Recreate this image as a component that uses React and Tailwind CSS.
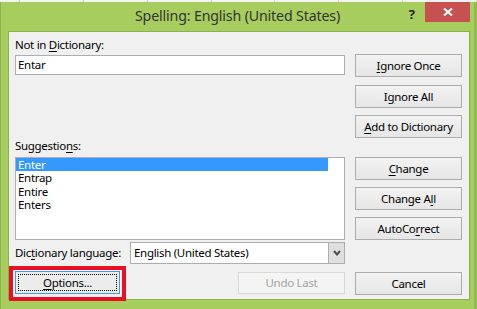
import React from 'react'

const font = "font-['Noto_Sans',sans-serif]"
const txt = 'text-[11.5px] tracking-[-0.3px] leading-[16px] whitespace-nowrap'

function Btn({ children, className = '' }){
  return (
    <div className={`h-[23px] w-[107px] flex items-center justify-center border border-[#acacac] bg-gradient-to-b from-[#f2f2f2] to-[#e6e6e6] text-black ${txt} ${className}`}>
      {children}
    </div>
  )
}

const U = ({ children }) => <span className="underline underline-offset-[2px]">{children}</span>

export default function App(){
  const cells = [20, 64, 64, 64, 63, 64, 64, 74]
  const words = ['Enter', 'Entrap', 'Entire', 'Enters']

  return (
    <div className={`w-[477px] h-[309px] overflow-hidden flex flex-col bg-[#a6cd5e] ${font}`}>
      {/* sheet grid peeking above the dialog */}
      <div className="h-[2px] flex bg-[#f3f3f3] shrink-0">
        {cells.map((w, i) => <div key={i} style={{ width: w }} className="h-full border-r border-[#d4d4d4]" />)}
      </div>

      <div className="flex-1 flex flex-col border-l border-r-[3px] border-l-[#8fb553] border-r-[#93ba57]">
        {/* title bar */}
        <div className="h-[29px] grid grid-cols-[1fr_auto_1fr] shrink-0">
          <div />
          <div className="pt-[4px] text-[14.2px] tracking-[-0.15px] leading-[20px] text-[#333] whitespace-nowrap">Spelling: English (United States)</div>
          <div className="flex justify-end items-start pr-[4px]">
            <div className="mt-[4px] mr-[10px] text-[13px] leading-[16px] font-bold text-[#222]">?</div>
            <div className="w-[45px] h-[20px] bg-[#c75050] flex items-center justify-center">
              <svg width="10" height="8" viewBox="0 0 10 8">
                <path d="M1 0.5 L9 7.5 M9 0.5 L1 7.5" stroke="#fff" strokeWidth="2" />
              </svg>
            </div>
          </div>
        </div>

        {/* dialog body */}
        <div className="relative flex-1 ml-[7px] mr-[4px] mb-[9px] border border-[#8ab14d] bg-[#f0f0f0] flex pl-[6px] gap-[10px]">
          <div className="w-[330px] flex flex-col">
            <div className={`mt-[5px] text-black ${txt}`}>Not in <U>D</U>ictionary:</div>
            <div className={`mt-[2px] h-[20px] border border-[#abadb3] bg-white px-[2px] text-black ${txt} leading-[18px]`}>Entar</div>

            <div className={`mt-[63px] text-black ${txt}`}>Suggestio<U>n</U>s:</div>
            <div className={`mt-[3px] h-[83px] border border-[#abadb3] bg-white ${txt}`}>
              {words.map((w, i) => (
                <div key={w} className={`h-[13.4px] leading-[13.4px] w-[312px] pl-[2px] ${i === 0 ? 'bg-[#3399ff] text-white' : 'text-black'}`}>{w}</div>
              ))}
            </div>

            <div className="mt-[2px] h-[22px] flex items-center justify-between">
              <div className={`text-black ${txt}`}>Dic<U>t</U>ionary language:</div>
              <div className="w-[215px] h-[22px] border border-[#abadb3] bg-white flex">
                <div className={`flex-1 pl-[3px] text-black ${txt} leading-[20px]`}>English (United States)</div>
                <div className="w-[16px] h-full border-l border-[#abadb3] bg-[#dfdfdf] flex items-center justify-center">
                  <svg width="8" height="6" viewBox="0 0 8 6">
                    <path d="M1 1 L4 4.5 L7 1" stroke="#4d4d4d" strokeWidth="2" fill="none" />
                  </svg>
                </div>
              </div>
            </div>

            <div className="mt-[7px] flex justify-between items-start">
              <div className="h-[23px] w-[105px] border border-[#3c9af0] bg-[#ececec] p-[2px]">
                <div className={`h-full border border-dotted border-black flex items-center justify-center text-black ${txt}`}>
                  <span><U>O</U>ptions...</span>
                </div>
              </div>
              <div className={`mt-[1px] h-[22px] w-[107px] border border-[#d9d9d9] bg-[#f4f4f4] flex items-center justify-center text-[#a3a3a3] ${txt}`}>Undo Last</div>
            </div>
          </div>

          <div className="w-[107px] flex flex-col">
            <Btn className="mt-[22px]"><span><U>I</U>gnore Once</span></Btn>
            <Btn className="mt-[8px]"><span>I<U>g</U>nore All</span></Btn>
            <Btn className="mt-[7px]"><span><U>A</U>dd to Dictionary</span></Btn>
            <Btn className="mt-[19px]"><span><U>C</U>hange</span></Btn>
            <Btn className="mt-[7px]"><span>Change A<U>l</U>l</span></Btn>
            <Btn className="mt-[7px]"><span>AutoCo<U>r</U>rect</span></Btn>
            <Btn className="mt-[32px]">Cancel</Btn>
          </div>

          {/* red annotation box around Options */}
          <div className="absolute left-0 top-[234px] w-[117px] h-[35px] border-4 border-[#e81123]" />
        </div>
      </div>
    </div>
  )
}
